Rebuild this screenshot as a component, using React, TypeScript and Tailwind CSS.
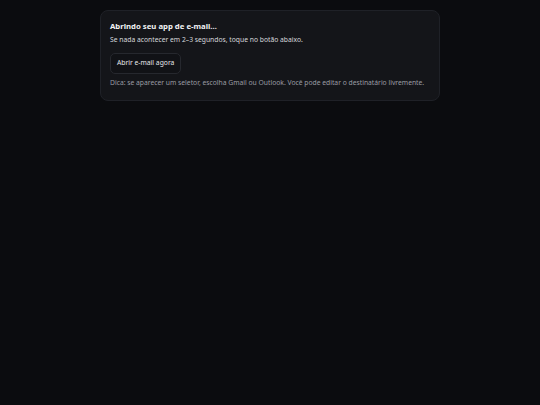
export default function App() {
  return (
    <div
      className="min-h-[405px] w-full bg-[#0b0c0f] pt-[10px]"
      style={{ fontFamily: '"Noto Sans", sans-serif' }}
    >
      <div className="mx-auto w-[340px] rounded-[8px] border border-[#1f2127] bg-[#141519] px-[9px] pt-[10px] pb-[12px]">
        <h1 className="text-[7.75px] font-bold leading-[10px] text-[#f1f2f4]">
          Abrindo seu app de e-mail…
        </h1>
        <p className="mt-[4px] text-[6.75px] leading-[10px] text-[#d6d8dc]">
          Se nada acontecer em 2–3 segundos, toque no botão abaixo.
        </p>
        <button className="mt-[8px] flex h-[21px] items-center rounded-[5px] border border-[#26282e] bg-[#111216] px-[6px] text-[6.75px] text-[#e6e7ea]">
          Abrir e-mail agora
        </button>
        <p className="mt-[4px] text-[6.75px] leading-[10px] text-[#9a9ca3]">
          Dica: se aparecer um seletor, escolha Gmail ou Outlook. Você pode editar o destinatário livremente.
        </p>
      </div>
    </div>
  );
}
